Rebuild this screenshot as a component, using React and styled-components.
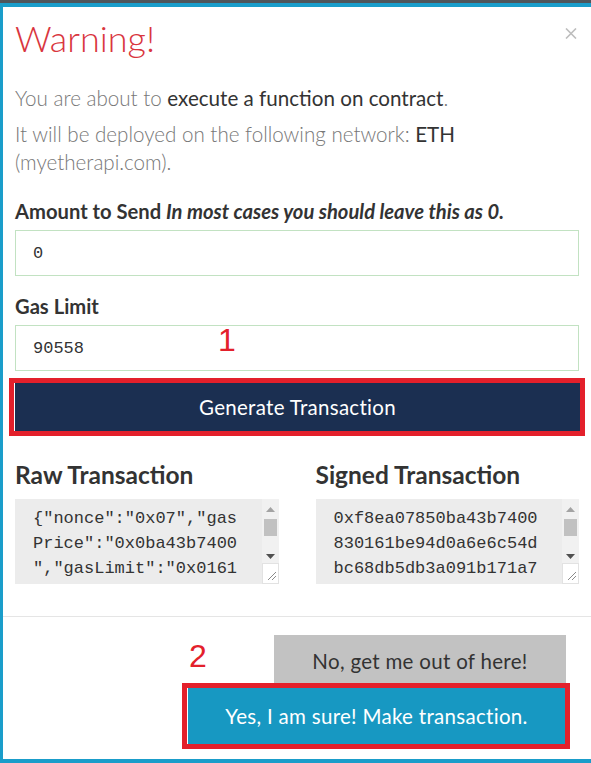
import React from 'react';
import styled, { createGlobalStyle } from 'styled-components';

const GlobalStyle = createGlobalStyle`
  html, body {
    margin: 0;
    padding: 0;
    background: #fff;
  }
  body {
    font-family: Lato, "Open Sans", sans-serif;
    color: #333;
    overflow: hidden;
  }
  * { box-sizing: border-box; }
`;

const Backdrop = styled.div`
  height: 763px;
  display: flex;
  flex-direction: column;
  background: #4f555b;
  padding-top: 3px;
`;

const Modal = styled.div`
  flex: 1;
  display: flex;
  flex-direction: column;
  background: #fff;
  border: 4px solid #1a9dca;
  border-left-width: 3px;
  border-right: none;
`;

const Header = styled.div`
  display: flex;
  justify-content: space-between;
  align-items: flex-start;
  padding: 10px 12px 0 12px;
`;

const Title = styled.h2`
  margin: 0;
  font-size: 36px;
  line-height: 43px;
  font-weight: 300;
  color: #d9363e;
`;

const Close = styled.button`
  border: none;
  background: none;
  padding: 0;
  margin: 11px 2px 0 0;
  display: flex;
  cursor: pointer;
`;

const Body = styled.div`
  padding: 0 12px 32px 12px;
  border-bottom: 1px solid #e5e5e5;
`;

const Lead = styled.p`
  margin: ${(p) => p.$top || 0}px 0 0 0;
  font-size: 20.6px;
  line-height: 28px;
  font-weight: 300;
  color: #777;

  strong {
    font-weight: 400;
    color: #333;
  }
`;

const Field = styled.div`
  position: relative;
  margin-top: ${(p) => p.$top}px;
`;

const Label = styled.label`
  display: block;
  font-size: 20.2px;
  line-height: 28px;
  font-weight: 700;
  color: #333;
  margin-bottom: 5px;

  em {
    font-style: italic;
  }
`;

const Input = styled.input`
  display: block;
  width: 100%;
  height: 46px;
  border: 1px solid #c2e2c2;
  background: #fff;
  padding: 0 17px;
  font-family: "Liberation Mono", "DejaVu Sans Mono", monospace;
  font-size: 17px;
  color: #333;
  outline: none;
`;

const Marker = styled.span`
  position: absolute;
  left: ${(p) => p.$x}px;
  top: ${(p) => p.$y}px;
  font-family: "Liberation Sans", Arial, sans-serif;
  font-size: 32px;
  line-height: 1;
  color: #e3202b;
  pointer-events: none;
`;

const Highlight = styled.div`
  position: relative;
  border: 5px solid #e3202b;
  padding-left: 1px;
  margin: ${(p) => p.$margin};
  background: #fff;
`;

const PrimaryButton = styled.button`
  display: block;
  width: 100%;
  height: 48px;
  border: none;
  background: #1b2f51;
  color: #fff;
  font-family: Lato, sans-serif;
  font-size: 20.5px;
  letter-spacing: 0.3px;
  cursor: pointer;
`;

const Outputs = styled.div`
  display: grid;
  grid-template-columns: 1fr 1fr;
  column-gap: 37px;
  margin-top: 24px;
`;

const OutputTitle = styled.h4`
  margin: 0 0 9px 0;
  font-size: 24.5px;
  line-height: 30px;
  font-weight: 700;
  color: #333;
`;

const TextBox = styled.div`
  display: flex;
  height: 85px;
  background: #ececec;
`;

const TextContent = styled.div`
  flex: 1;
  padding: 7px 16px 0 18px;
  font-family: "Liberation Mono", "DejaVu Sans Mono", monospace;
  font-size: 17px;
  line-height: 25px;
  color: #333;
  word-break: break-all;
  line-break: anywhere;
  overflow: hidden;
`;

const ScrollTrack = styled.div`
  width: 17px;
  display: flex;
  flex-direction: column;
  align-items: center;
  background: #f1f1f1;
`;

const ScrollArrow = styled.div`
  height: ${(p) => p.$h}px;
  display: flex;
  align-items: center;
  justify-content: center;
`;

const ScrollThumb = styled.div`
  width: 13px;
  height: 17px;
  background: #c1c1c1;
`;

const ScrollGap = styled.div`
  flex: 1;
`;

const Resizer = styled.div`
  width: 17px;
  height: 21px;
  background: #fff;
  border: 1px solid #e2e2e2;
  display: flex;
  align-items: flex-end;
  justify-content: flex-end;
  padding: 0 2px 3px 0;
`;

const Footer = styled.div`
  position: relative;
  display: flex;
  flex-direction: column;
  align-items: flex-end;
  padding: 18px 25px 0 0;
`;

const CancelButton = styled.button`
  width: 292px;
  height: 52px;
  border: none;
  background: #c2c2c2;
  color: #333;
  font-family: Lato, sans-serif;
  font-size: 20.5px;
  letter-spacing: 0.3px;
  cursor: pointer;
`;

const ConfirmButton = styled.button`
  display: block;
  width: 377px;
  height: 56px;
  border: none;
  background: #1798c2;
  color: #fff;
  font-family: Lato, sans-serif;
  font-size: 20.5px;
  letter-spacing: 0.3px;
  cursor: pointer;
`;

const Scrollbar = () => (
  <ScrollTrack>
    <ScrollArrow $h={20}>
      <svg width="9" height="5" viewBox="0 0 9 5">
        <path d="M0 5 L4.5 0 L9 5 Z" fill="#a3a3a3" />
      </svg>
    </ScrollArrow>
    <ScrollThumb />
    <ScrollGap />
    <ScrollArrow $h={14}>
      <svg width="9" height="5" viewBox="0 0 9 5">
        <path d="M0 0 L4.5 5 L9 0 Z" fill="#505050" />
      </svg>
    </ScrollArrow>
    <Resizer>
      <svg width="9" height="9" viewBox="0 0 9 9">
        <path d="M1 9 L9 1 M5 9 L9 5" stroke="#8a8a8a" strokeWidth="1" />
      </svg>
    </Resizer>
  </ScrollTrack>
);

const Output = ({ title, text }) => (
  <div>
    <OutputTitle>{title}</OutputTitle>
    <TextBox>
      <TextContent>{text}</TextContent>
      <Scrollbar />
    </TextBox>
  </div>
);

export default function App() {
  return (
    <Backdrop>
      <GlobalStyle />
      <Modal>
        <Header>
          <Title>Warning!</Title>
          <Close aria-label="Close">
            <svg width="12" height="11" viewBox="0 0 12 11">
              <path d="M1 0.5 L11 10.5 M11 0.5 L1 10.5" stroke="#bdbdbd" strokeWidth="1.6" />
            </svg>
          </Close>
        </Header>
        <Body>
          <Lead $top={24}>
            You are about to <strong>execute a function on contract</strong>.
          </Lead>
          <Lead $top={8}>
            It will be deployed on the following network: <strong>ETH</strong>
            <br />
            (myetherapi.com).
          </Lead>
          <Field $top={21}>
            <Label>
              Amount to Send <em>In most cases you should leave this as 0.</em>
            </Label>
            <Input defaultValue="0" />
          </Field>
          <Field $top={16}>
            <Label>Gas Limit</Label>
            <Input defaultValue="90558" />
            <Marker $x={203} $y={32}>1</Marker>
          </Field>
          <Highlight $margin="7px -6px 0 -6px">
            <PrimaryButton>Generate Transaction</PrimaryButton>
          </Highlight>
          <Outputs>
            <Output
              title="Raw Transaction"
              text={'{"nonce":"0x07","gasPrice":"0x0ba43b7400","gasLimit":"0x0161'}
            />
            <Output
              title="Signed Transaction"
              text="0xf8ea07850ba43b7400830161be94d0a6e6c54dbc68db5db3a091b171a7"
            />
          </Outputs>
        </Body>
        <Footer>
          <Marker $x={186} $y={23}>2</Marker>
          <CancelButton>No, get me out of here!</CancelButton>
          <Highlight $margin="-4px -4px 0 0">
            <ConfirmButton>Yes, I am sure! Make transaction.</ConfirmButton>
          </Highlight>
        </Footer>
      </Modal>
    </Backdrop>
  );
}
